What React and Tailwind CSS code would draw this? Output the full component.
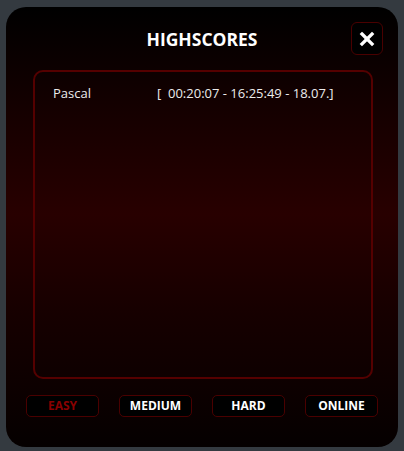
import { X } from 'lucide-react';

const scores = [{ id: 1, name: 'Pascal', detail: '[  00:20:07 - 16:25:49 - 18.07.]' }];

const modes = ['EASY', 'MEDIUM', 'HARD', 'ONLINE'];

export default function App() {
  const active = 'EASY';

  return (
    <div className="h-[451px] w-full bg-[#343a40] pt-[7px] px-[6px] pb-[4px]" style={{ fontFamily: '"Open Sans", "Noto Sans", sans-serif' }}>
      <div className="flex h-[440px] flex-col rounded-[20px] bg-[linear-gradient(to_bottom,#000000_0%,#160000_25%,#280000_47%,#160000_70%,#050000_100%)]">
        <div className="relative flex h-[63px] items-start justify-center pt-[15px]">
          <h2 className="mt-[4px] text-[17.5px] font-bold leading-[26px] text-white">HIGHSCORES</h2>
          <button className="absolute right-[15px] top-[15px] flex h-[33px] w-[32px] items-center justify-center rounded-[6px] border border-[#4a0000] bg-black">
            <X className="h-[20px] w-[20px] text-white" strokeWidth={4} strokeLinecap="square" />
          </button>
        </div>

        <div className="ml-[27px] mr-[25px] h-[309px] rounded-[10px] border-2 border-[#550000] px-[18px] pt-[12px]">
          {scores.map((s) => (
            <div key={s.id} className="flex text-[13px] leading-[18px] text-[#ececec]">
              <span className="w-[104px]">{s.name}</span>
              <span className="whitespace-pre">{s.detail}</span>
            </div>
          ))}
        </div>

        <div className="mt-[16px] flex gap-[20px] pl-[20px]">
          {modes.map((m) => (
            <button
              key={m}
              className={`flex h-[22px] w-[73px] items-center justify-center rounded-[5px] border border-[#4a0000] bg-black text-[12px] font-bold ${
                m === active ? 'text-[#8b0000]' : 'text-white'
              }`}
            >
              {m}
            </button>
          ))}
        </div>
      </div>
    </div>
  );
}
